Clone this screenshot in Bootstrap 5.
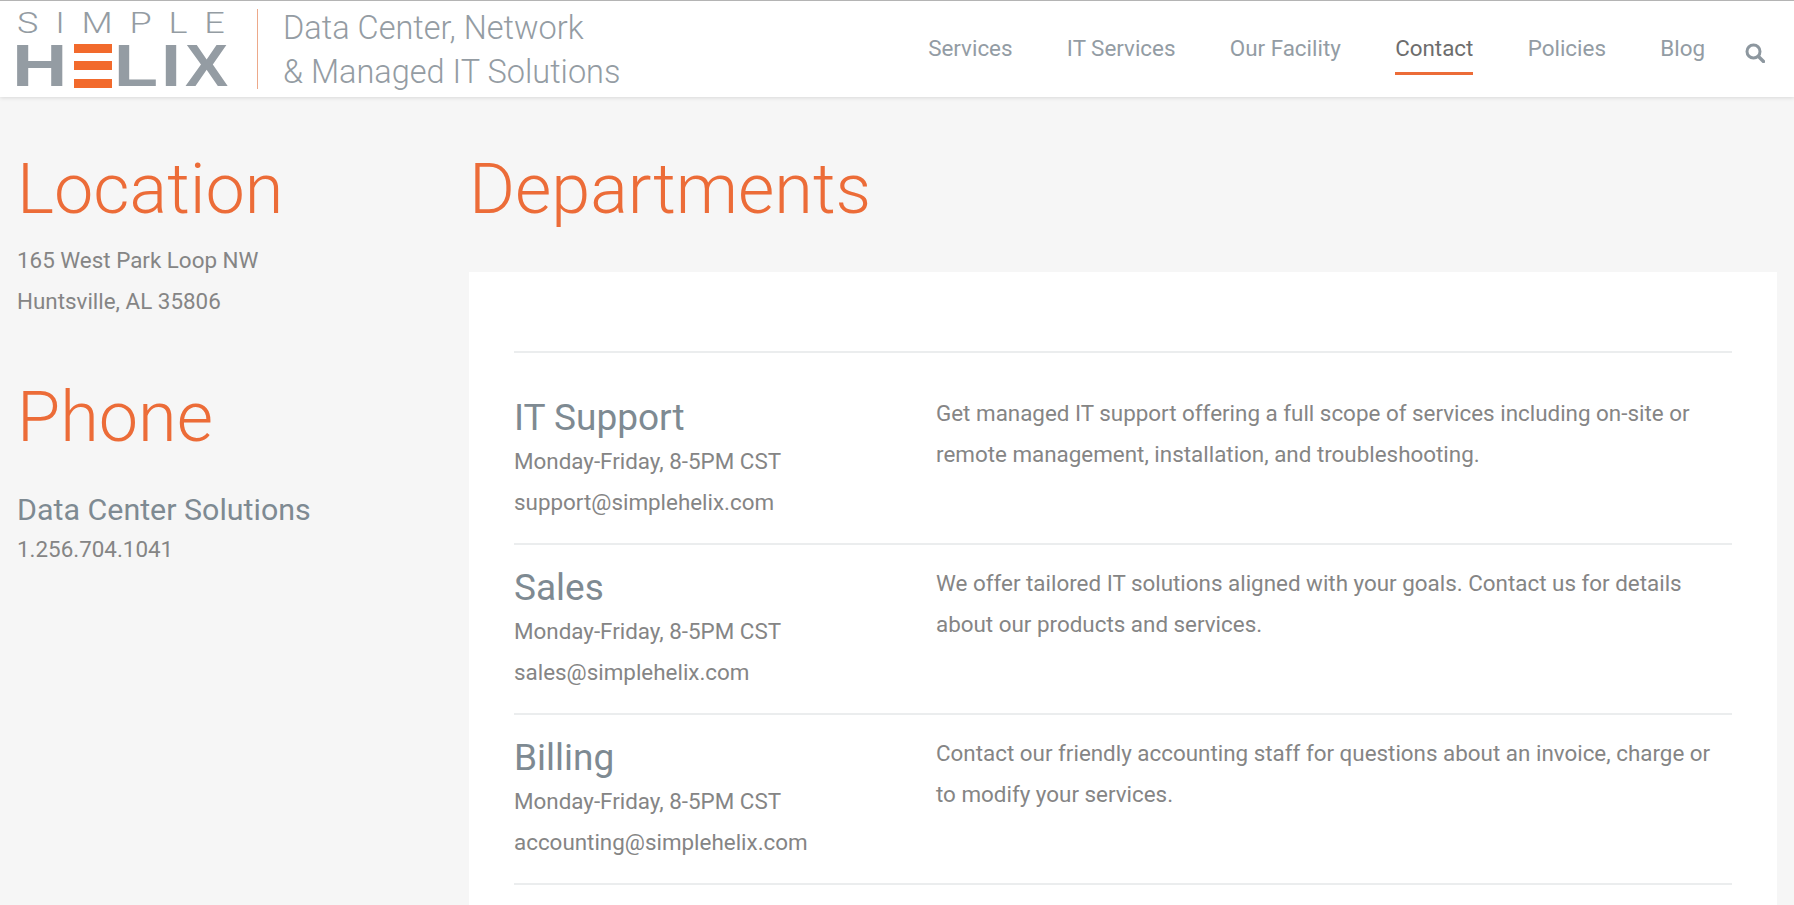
<!doctype html>
<html lang="en">
<head>
<meta charset="utf-8">
<meta name="viewport" content="width=device-width, initial-scale=1">
<title>Contact - Simple Helix</title>
<link href="https://cdn.jsdelivr.net/npm/bootstrap@5.3.0/dist/css/bootstrap.min.css" rel="stylesheet">
<style>
  html, body { height: 905px; overflow: hidden; }
  body { background: #f6f6f6; color: #858585; font-family: Roboto, "Liberation Sans", sans-serif; font-size: 22.4px; line-height: 41px; }
  .site-head { height: 97px; background: #fff; border-top: 1px solid #b4b4b4; box-shadow: 0 1px 4px rgba(0,0,0,.12); padding: 0 29px 0 12px; }
  .logo-box { width: 216px; color: #949ca3; }
  .logo-top { font-size: 30px; font-weight: 300; letter-spacing: 14px; line-height: 24px; white-space: nowrap; margin: 0 0 0 5px; transform: scaleX(1.2); transform-origin: left; }
  .logo-main { font-family: "Liberation Sans", sans-serif; font-weight: 700; font-size: 60px; line-height: 44px; height: 44px; margin-top: 9px; }
  .logo-main span { display: block; transform-origin: left; transform: scaleX(1.2); }
  .logo-main .let-h { width: 62px; transform: scaleX(1.28); }
  .logo-main .let-l { width: 47px; margin-left: 2px; }
  .logo-main .let-i { width: 24px; }
  .logo-main .let-x { transform: scaleX(1.08); }
  .logo-main .logo-e { width: 38px; height: 44px; transform: none; }
  .logo-e i { display: block; height: 9px; background: #f26a2c; }
  .logo-div { width: 1px; height: 80px; background: #eda98a; margin: 0 25px 0 29px; }
  .tagline { font-size: 32.5px; font-weight: 300; line-height: 44px; color: #949ca3; padding-top: 1px; }
  .top-link { color: #939ca4; font-size: 22.4px; line-height: 30px; text-decoration: none; padding: 10px 0 9px; margin-left: 54.3px; border-bottom: 3px solid transparent; }
  .top-link.on { color: #6d6d6d; border-bottom-color: #ec6c38; }
  .find-icon { margin-left: 40px; margin-top: 8px; width: 20px; height: 20px; }
  .page-wrap { padding: 0 17px; }
  .side-col { width: 452px; }
  .main-col { width: 1308px; }
  .big-head { font-size: 70.2px; font-weight: 300; color: #ec6c38; line-height: 84px; margin: 50px 0 0; }
  .head-phone { margin-top: 53px; }
  .head-depts { margin-bottom: 41px; }
  .addr-box { margin-top: 9px; }
  .white-box { background: #fff; padding: 79px 45px 0; }
  .dept-row { border-top: 2px solid #ebedee; height: 170px; padding-top: 20px; }
  .dept-row.first-row { height: 192px; padding-top: 42px; }
  .dept-info { width: 422px; }
  .dept-text { margin: -2px 0 0; }
  .dept-name { font-size: 37px; font-weight: 400; color: #7e8a92; line-height: 46px; margin: 0; }
  .sub-name { font-size: 30.4px; font-weight: 400; color: #7e8a92; line-height: 40px; margin: 31px 0 0; }
  .phone-no { line-height: 38px; }
</style>
</head>
<body>
<header class="site-head d-flex align-items-center">
  <a href="#" class="logo-box d-block text-decoration-none">
    <div class="logo-top">SIMPLE</div>
    <div class="logo-main d-flex"><span class="let-h">H</span><span class="logo-e d-flex flex-column justify-content-between"><i></i><i></i><i></i></span><span class="let-l">L</span><span class="let-i">I</span><span class="let-x">X</span></div>
  </a>
  <div class="logo-div"></div>
  <div class="tagline">Data Center, Network<br>&amp; Managed IT Solutions</div>
  <nav class="d-flex align-items-center ms-auto">
    <a class="top-link" href="#">Services</a>
    <a class="top-link" href="#">IT Services</a>
    <a class="top-link" href="#">Our Facility</a>
    <a class="top-link on" href="#">Contact</a>
    <a class="top-link" href="#">Policies</a>
    <a class="top-link" href="#">Blog</a>
    <svg class="find-icon" viewBox="0 0 20 20" fill="none" stroke="#8d979f"><circle cx="8.5" cy="8.5" r="6.5" stroke-width="3"/><path d="M13.5 13.5 L18.5 18.5" stroke-width="3.4" stroke-linecap="round"/></svg>
  </nav>
</header>
<div class="page-wrap d-flex">
  <aside class="side-col">
    <h2 class="big-head">Location</h2>
    <div class="addr-box">165 West Park Loop NW<br>Huntsville, AL 35806</div>
    <h2 class="big-head head-phone">Phone</h2>
    <h3 class="sub-name">Data Center Solutions</h3>
    <div class="phone-no">1.256.704.1041</div>
  </aside>
  <main class="main-col">
    <h1 class="big-head head-depts">Departments</h1>
    <div class="white-box">
      <section class="dept-row first-row d-flex">
        <div class="dept-info">
          <h3 class="dept-name">IT Support</h3>
          <div>Monday-Friday, 8-5PM CST</div>
          <div>support@simplehelix.com</div>
        </div>
        <p class="dept-text flex-grow-1">Get managed IT support offering a full scope of services including on-site or<br>remote management, installation, and troubleshooting.</p>
      </section>
      <section class="dept-row d-flex">
        <div class="dept-info">
          <h3 class="dept-name">Sales</h3>
          <div>Monday-Friday, 8-5PM CST</div>
          <div>sales@simplehelix.com</div>
        </div>
        <p class="dept-text flex-grow-1">We offer tailored IT solutions aligned with your goals. Contact us for details<br>about our products and services.</p>
      </section>
      <section class="dept-row d-flex">
        <div class="dept-info">
          <h3 class="dept-name">Billing</h3>
          <div>Monday-Friday, 8-5PM CST</div>
          <div>accounting@simplehelix.com</div>
        </div>
        <p class="dept-text flex-grow-1">Contact our friendly accounting staff for questions about an invoice, charge or<br>to modify your services.</p>
      </section>
      <section class="dept-row"></section>
    </div>
  </main>
</div>
<script src="https://cdn.jsdelivr.net/npm/bootstrap@5.3.0/dist/js/bootstrap.bundle.min.js"></script>
</body>
</html>
